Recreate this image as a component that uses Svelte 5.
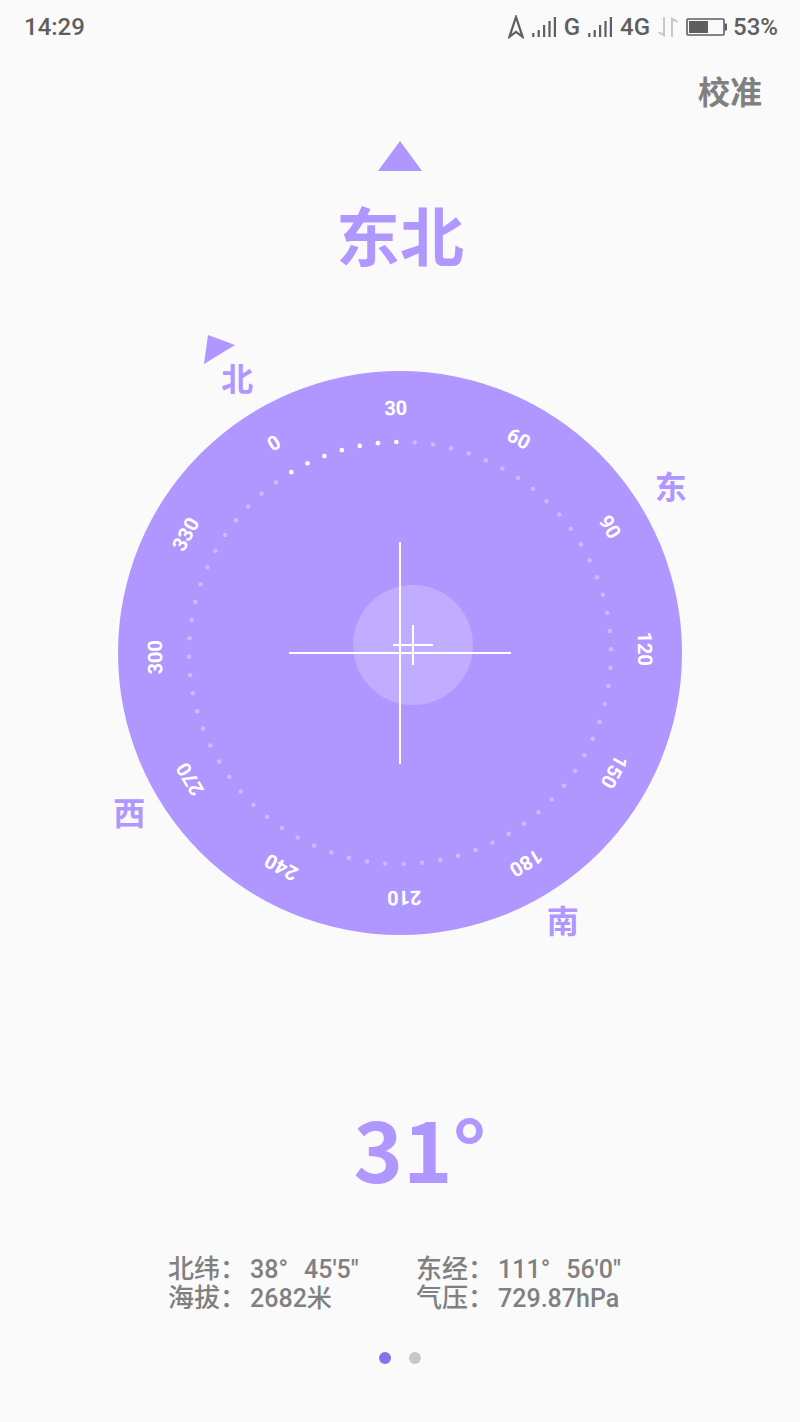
<script>
  // Sensor values
  let heading = $state(31);
  let activePage = $state(0);
  const bubble = { x: 13, y: -8 };

  const readings = [
    { label: "北纬", value: "38°", rest: "45'5\"" },
    { label: "东经", value: "111°", rest: "56'0\"" },
    { label: "海拔", value: "2682米" },
    { label: "气压", value: "729.87hPa" },
  ];

  const cardinals = [
    { name: "北", angle: 0 },
    { name: "东", angle: 90 },
    { name: "南", angle: 180 },
    { name: "西", angle: 270 },
  ];

  const degrees = Array.from({ length: 12 }, (_, i) => i * 30);
  const ticks = Array.from({ length: 72 }, (_, i) => i * 5);
  const bars = [4, 7, 12, 16, 20];

  // Point on a circle around the dial centre, 0 degrees is up
  function polar(angle, radius) {
    const rad = ((angle - heading) * Math.PI) / 180;
    return { x: Math.sin(rad) * radius, y: -Math.cos(rad) * radius };
  }
</script>

{#snippet signal()}
  <svg width="24" height="22" viewBox="0 0 24 22" aria-hidden="true">
    {#each bars as bar, i}
      <rect x={i * 5.4 + 0.2} y={21 - bar} width="2.2" height={bar} fill="#5f5f5f" />
    {/each}
  </svg>
{/snippet}

<div class="screen">
  <header class="status">
    <span class="time">14:29</span>
    <div class="indicators">
      <svg width="16" height="24" viewBox="0 0 16 24" aria-hidden="true">
        <path d="M8 2 14.6 21.8 8 16.8 1.4 21.8Z" fill="none" stroke="#5f5f5f" stroke-width="2.2" />
      </svg>
      {@render signal()}
      <span class="network">G</span>
      {@render signal()}
      <span class="network">4G</span>
      <svg width="20" height="22" viewBox="0 0 20 22" fill="#c8c8c8" aria-hidden="true">
        <path d="M5 1H7V21L0 17 1 15.500 5 17.500ZM13 21H15V4.500L19 6.500 20 5 13 1Z" />
      </svg>
      <div class="battery">
        <svg width="41" height="18" viewBox="0 0 41 18" aria-hidden="true">
          <rect x="1" y="1" width="37" height="16" rx="1" fill="none" stroke="#5f5f5f" stroke-width="1.6" />
          <rect x="3" y="3" width="19" height="12" fill="#5f5f5f" />
          <rect x="38.500" y="5.500" width="2.500" height="7" fill="#5f5f5f" />
        </svg>
        <span>53%</span>
      </div>
    </div>
  </header>

  <div class="toolbar">
    <button class="calibrate">校准</button>
  </div>

  <main>
    <svg class="pointer" width="44" height="30" viewBox="0 0 44 30" aria-hidden="true">
      <path d="M22 0 44 30H0Z" />
    </svg>
    <h1>东北</h1>

    <svg class="dial" viewBox="-320 -340 640 640" role="img" aria-label="指南针">
      <circle class="plate" r="282" />

      {#each ticks as tick}
        {@const p = polar(tick, 211)}
        <circle class="tick" class:lit={tick <= heading} cx={p.x} cy={p.y} r="2.3" />
      {/each}

      {#each degrees as degree}
        <g transform="rotate({degree - heading})">
          <text class="degree" y="-238">{degree}</text>
        </g>
      {/each}

      {#each cardinals as { name, angle }}
        {@const p = polar(angle, 316)}
        <text class="cardinal" x={p.x} y={p.y + 9}>{name}</text>
      {/each}

      <path class="north" d="M-192-318-165-308-196-289Z" />

      <circle class="bubble" cx={bubble.x} cy={bubble.y} r="60" />
      <path class="cross" d="M-111 0H111M0-111V111" />
      <path class="cross" d="M{bubble.x - 20} {bubble.y}h40M{bubble.x} {bubble.y - 20}v40" />
    </svg>

    <p class="heading">{heading}°</p>

    <dl>
      {#each readings as { label, value, rest }}
        <div class="reading">
          <dt>{label}：</dt>
          <dd>
            <span>{value}</span>
            {#if rest}<span>{rest}</span>{/if}
          </dd>
        </div>
      {/each}
    </dl>
  </main>

  <nav class="pager" aria-label="页面">
    {#each [0, 1] as page}
      <button
        class="dot"
        class:active={activePage === page}
        aria-label="第 {page + 1} 页"
        onclick={() => (activePage = page)}
      ></button>
    {/each}
  </nav>
</div>

<style>
  :global(body) {
    margin: 0;
    background: #fafafa;
  }

  .screen {
    display: flex;
    flex-direction: column;
    min-height: 100vh;
    box-sizing: border-box;
    padding-bottom: 58px;
    background: #fafafa;
    color: #808080;
    font-family: "Noto Sans CJK SC", sans-serif;
  }

  .status {
    display: flex;
    justify-content: space-between;
    align-items: center;
    height: 54px;
    padding: 0 22px 0 24px;
    color: #5f5f5f;
    font-family: Roboto, "Noto Sans CJK SC", sans-serif;
    font-size: 24px;
    font-weight: 500;
  }

  .indicators {
    display: flex;
    align-items: center;
    gap: 8px;
  }

  .battery {
    display: flex;
    align-items: center;
    gap: 6px;
  }

  .toolbar {
    display: flex;
    justify-content: flex-end;
    padding: 12px 38px 0;
  }

  .calibrate {
    padding: 0;
    border: 0;
    background: none;
    color: #808080;
    font: inherit;
    font-size: 32px;
    font-weight: 700;
    line-height: 48px;
    cursor: pointer;
  }

  main {
    display: flex;
    flex-direction: column;
    align-items: center;
    padding-top: 27px;
  }

  .pointer,
  .plate,
  .north {
    fill: #b096ff;
  }

  h1 {
    margin: 22px 0 0;
    color: #b096ff;
    font-size: 64px;
    font-weight: 700;
    line-height: 80px;
  }

  .dial {
    width: 80%;
    margin-top: 40px;
  }

  .tick {
    fill: #fff;
    opacity: 0.35;
  }

  .tick.lit {
    opacity: 1;
  }

  .degree {
    fill: #fff;
    font-family: Roboto, sans-serif;
    font-size: 20px;
    font-weight: 700;
    text-anchor: middle;
  }

  .cardinal {
    fill: #b096ff;
    font-size: 32px;
    font-weight: 700;
    text-anchor: middle;
  }

  .bubble {
    fill: #fff;
    opacity: 0.22;
  }

  .cross {
    fill: none;
    stroke: #fff;
    stroke-width: 2;
  }

  .heading {
    margin: 146px 0 0;
    padding-left: 40px;
    color: #b096ff;
    font-size: 84px;
    font-weight: 700;
    line-height: 96px;
  }

  dl {
    display: grid;
    grid-template-columns: 1fr 1fr;
    column-gap: 32px;
    width: 58%;
    margin: 60px 0 0;
    font-family: Roboto, "Noto Sans CJK SC", sans-serif;
    font-weight: 500;
    line-height: 28px;
  }

  .reading {
    display: flex;
    align-items: baseline;
    gap: 4px;
    white-space: nowrap;
  }

  dt {
    font-size: 26px;
  }

  dd {
    display: flex;
    gap: 16px;
    margin: 0;
    font-size: 25px;
  }

  .pager {
    display: flex;
    justify-content: center;
    gap: 18px;
    margin-top: auto;
  }

  .dot {
    width: 12px;
    height: 12px;
    padding: 0;
    border: 0;
    border-radius: 50%;
    background: #c8c8c8;
    cursor: pointer;
  }

  .dot.active {
    background: #8672ec;
  }
</style>
